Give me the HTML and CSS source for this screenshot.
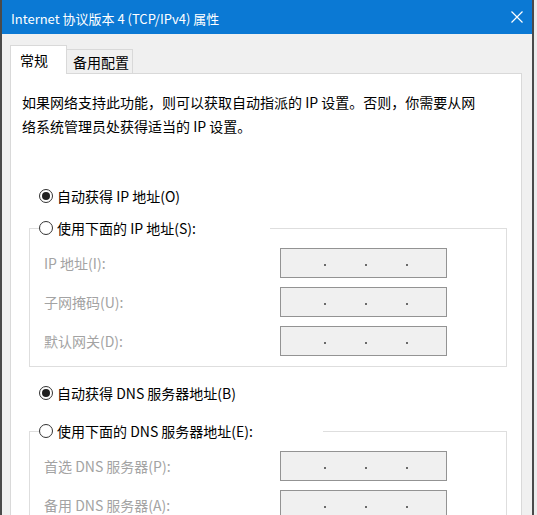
FILE: index.html
```html
<!DOCTYPE html>
<html lang="zh-CN">
<head>
  <meta charset="UTF-8">
  <meta name="viewport" content="width=device-width, initial-scale=1.0">
  <title>Internet 协议版本 4 (TCP/IPv4) 属性</title>
  <link rel="stylesheet" href="styles.css">
</head>
<body>
  <div class="window">
    <div class="titlebar">
      <span class="title">Internet 协议版本 4 (TCP/IPv4) 属性</span>
      <svg class="close" width="12" height="12" viewBox="0 0 12 12">
        <path d="M0.5 0.5 L11.5 11.5 M11.5 0.5 L0.5 11.5" stroke="#fff" stroke-width="1.2" fill="none"/>
      </svg>
    </div>

    <div class="client">
      <div class="tabs">
        <div class="tab active">常规</div>
        <div class="tab">备用配置</div>
      </div>

      <div class="panel">
        <p class="intro">如果网络支持此功能，则可以获取自动指派的 IP 设置。否则，你需要从网<br>络系统管理员处获得适当的 IP 设置。</p>

        <div class="radio-row first"><span class="radio checked"></span>自动获得 IP 地址(O)</div>

        <fieldset class="group">
          <legend class="radio-row legend-ip"><span class="radio"></span>使用下面的 IP 地址(S):</legend>
          <div class="field">
            <span class="label">IP 地址(I):</span>
            <span class="ipbox"><i></i><i></i><i></i></span>
          </div>
          <div class="field">
            <span class="label">子网掩码(U):</span>
            <span class="ipbox"><i></i><i></i><i></i></span>
          </div>
          <div class="field">
            <span class="label">默认网关(D):</span>
            <span class="ipbox"><i></i><i></i><i></i></span>
          </div>
        </fieldset>

        <div class="radio-row dns-auto"><span class="radio checked"></span>自动获得 DNS 服务器地址(B)</div>

        <fieldset class="group dns">
          <legend class="radio-row legend-dns"><span class="radio"></span>使用下面的 DNS 服务器地址(E):</legend>
          <div class="field">
            <span class="label">首选 DNS 服务器(P):</span>
            <span class="ipbox"><i></i><i></i><i></i></span>
          </div>
          <div class="field">
            <span class="label">备用 DNS 服务器(A):</span>
            <span class="ipbox"><i></i><i></i><i></i></span>
          </div>
        </fieldset>
      </div>
    </div>
  </div>
</body>
</html>
```

FILE: styles.css
```css
body {
  margin: 0;
  background: #ececec;
  font-family: "Noto Sans CJK SC", "Noto Sans", sans-serif;
  font-size: 14px;
  color: #000;
  overflow: hidden;
}

.window {
  width: 534px;
  height: 515px;
  box-sizing: border-box;
  border-left: 2px solid #4a4a4a;
  border-right: 2px solid #4a4a4a;
  background: #f0f0f0;
  overflow: hidden;
}

/* Titelleiste */
.titlebar {
  height: 34px;
  background: #0b79d4;
  display: flex;
  align-items: center;
  justify-content: space-between;
  padding: 0 9px 0 9px;
  color: #fff;
}

.title {
  font-size: 13px;
  margin-top: 2px;
}

.close {
  display: block;
}

.client {
  padding: 11px 10px 0 8px;
}

/* Reiter */
.tabs {
  display: flex;
  align-items: flex-end;
}

.tab {
  height: 24px;
  box-sizing: border-box;
  padding: 2px 0 0 6px;
  width: 66px;
  background: #f0f0f0;
  border: 1px solid #d9d9d9;
  border-left: none;
  border-bottom: none;
}

.tab.active {
  position: relative;
  z-index: 1;
  height: 29px;
  width: 57px;
  margin-bottom: -1px;
  padding: 4px 0 0 9px;
  background: #fff;
  border-left: 1px solid #d9d9d9;
}

.panel {
  background: #fff;
  border: 1px solid #d9d9d9;
  padding: 16px 0 40px 11px;
}

.intro {
  margin: 0;
  line-height: 24px;
}

/* Optionsfelder */
.radio-row {
  display: flex;
  align-items: center;
  height: 20px;
  padding-left: 17px;
}

.radio-row.first {
  margin-top: 48px;
}

.radio-row.dns-auto {
  margin-top: 16px;
}

.radio {
  width: 14px;
  height: 14px;
  box-sizing: border-box;
  border: 1px solid #333;
  border-radius: 50%;
  margin-right: 4px;
  display: flex;
  align-items: center;
  justify-content: center;
  background: #fff;
}

.radio.checked::after {
  content: "";
  width: 8px;
  height: 8px;
  border-radius: 50%;
  background: #1f1f1f;
}

/* Gruppenrahmen */
.group {
  margin: 12px 14px 0 7px;
  padding: 10px 0 10px 9px;
  border: 1px solid #dedede;
  min-width: 0;
}

.group.dns {
  margin-top: 18px;
}

.group legend.radio-row {
  padding: 0;
  margin: 0;
  box-sizing: border-box;
}

.legend-ip {
  width: 231px;
}

.legend-dns {
  width: 284px;
}

.field {
  display: flex;
  align-items: center;
  height: 30px;
  padding-left: 5px;
}

.field + .field {
  margin-top: 9px;
}

.label {
  width: 236px;
  color: #a3a3a3;
}

.ipbox {
  width: 167px;
  height: 30px;
  box-sizing: border-box;
  border: 1px solid #939393;
  background: #f0f0f0;
  display: flex;
  align-items: center;
  gap: 39px;
  padding: 3px 0 0 43px;
}

.ipbox i {
  width: 2px;
  height: 2px;
  background: #6a6a6a;
}
```
